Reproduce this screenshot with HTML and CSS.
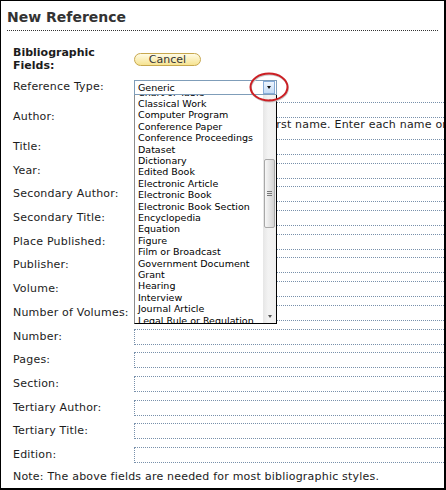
FILE: index.html
```html
<!DOCTYPE html>
<html>
<head>
<meta charset="utf-8">
<link rel="stylesheet" href="styles.css">
</head>
<body>
<div class="panel">
  <h1 class="title">New Reference</h1>
  <div class="form">
    <div class="row row-head">
      <div class="label label-bold">Bibliographic Fields:</div>
      <div class="field"><button class="cancel">Cancel</button></div>
    </div>
    <div class="row row-type">
      <div class="label">Reference Type:</div>
      <div class="field">
        <div class="select">
          <span class="select-text">Generic</span>
          <span class="select-btn"><span class="tri tri-down"></span></span>
          <div class="dropdown">
            <div class="options">
              <ul>
                <li>Chart or Table</li>
                <li>Classical Work</li>
                <li>Computer Program</li>
                <li>Conference Paper</li>
                <li>Conference Proceedings</li>
                <li>Dataset</li>
                <li>Dictionary</li>
                <li>Edited Book</li>
                <li>Electronic Article</li>
                <li>Electronic Book</li>
                <li>Electronic Book Section</li>
                <li>Encyclopedia</li>
                <li>Equation</li>
                <li>Figure</li>
                <li>Film or Broadcast</li>
                <li>Government Document</li>
                <li>Grant</li>
                <li>Hearing</li>
                <li>Interview</li>
                <li>Journal Article</li>
                <li>Legal Rule or Regulation</li>
                <li>Magazine Article</li>
              </ul>
            </div>
            <div class="scrollbar">
              <div class="sb-arrow"><span class="tri tri-up"></span></div>
              <div class="sb-track"><div class="sb-thumb"><i></i><i></i><i></i></div></div>
              <div class="sb-arrow"><span class="tri tri-down"></span></div>
            </div>
          </div>
          <svg class="callout" width="41" height="31" viewBox="0 0 41 31">
            <ellipse cx="20.5" cy="16" rx="18.5" ry="13.5" fill="none" stroke="#c9c9c9" stroke-width="2"/>
            <ellipse cx="20" cy="15" rx="18.5" ry="13.5" fill="none" stroke="#cc1f24" stroke-width="2"/>
          </svg>
        </div>
      </div>
    </div>
    <div class="row row-author">
      <div class="label">Author:</div>
      <div class="field">
        <div class="input"></div>
        <div class="hint">Use format Last name, First name. Enter each name on a new line.</div>
      </div>
    </div>
    <div class="row row-first">
      <div class="label">Title:</div>
      <div class="field"><div class="input"></div></div>
    </div>
    <div class="row">
      <div class="label">Year:</div>
      <div class="field"><div class="input"></div></div>
    </div>
    <div class="row">
      <div class="label">Secondary Author:</div>
      <div class="field"><div class="input"></div></div>
    </div>
    <div class="row">
      <div class="label">Secondary Title:</div>
      <div class="field"><div class="input"></div></div>
    </div>
    <div class="row">
      <div class="label">Place Published:</div>
      <div class="field"><div class="input"></div></div>
    </div>
    <div class="row">
      <div class="label">Publisher:</div>
      <div class="field"><div class="input"></div></div>
    </div>
    <div class="row">
      <div class="label">Volume:</div>
      <div class="field"><div class="input"></div></div>
    </div>
    <div class="row">
      <div class="label">Number of Volumes:</div>
      <div class="field"><div class="input"></div></div>
    </div>
    <div class="row">
      <div class="label">Number:</div>
      <div class="field"><div class="input"></div></div>
    </div>
    <div class="row">
      <div class="label">Pages:</div>
      <div class="field"><div class="input"></div></div>
    </div>
    <div class="row">
      <div class="label">Section:</div>
      <div class="field"><div class="input"></div></div>
    </div>
    <div class="row">
      <div class="label">Tertiary Author:</div>
      <div class="field"><div class="input"></div></div>
    </div>
    <div class="row">
      <div class="label">Tertiary Title:</div>
      <div class="field"><div class="input"></div></div>
    </div>
    <div class="row">
      <div class="label">Edition:</div>
      <div class="field"><div class="input"></div></div>
    </div>
    <p class="note">Note: The above fields are needed for most bibliographic styles.</p>
  </div>
</div>
</body>
</html>
```

FILE: styles.css
```css
* { box-sizing: border-box; }
body {
  margin: 0;
  background: #fff;
  font-family: "DejaVu Sans", Verdana, sans-serif;
  color: #1c1c1c;
}
.panel {
  width: 446px;
  height: 490px;
  border: 1px solid #000;
  border-right-width: 2px;
  border-bottom-width: 2px;
  overflow: hidden;
  background: #fff;
}
.title {
  margin: 0 6px;
  padding: 7px 0 4px 0;
  font-size: 14px;
  line-height: 18px;
  font-weight: bold;
  color: #333;
  border-bottom: 1px dotted #333;
}
.form {
  display: flex;
  flex-direction: column;
  padding-left: 12px;
}
.row {
  display: flex;
  align-items: center;
  margin-top: 7.69px;
}
.label {
  width: 121px;
  flex: none;
  font-size: 11px;
  line-height: 16px;
  letter-spacing: 0.2px;
  white-space: nowrap;
}
.field {
  flex: none;
  display: flex;
  flex-direction: column;
}
.row-head { margin-top: 15px; }
.label-bold {
  font-weight: bold;
  line-height: 13px;
  letter-spacing: 0;
  white-space: normal;
  padding-right: 20px;
}
.cancel {
  width: 67px;
  height: 13px;
  padding: 0;
  border: 1px solid #c7a84e;
  border-radius: 7px;
  background: linear-gradient(#fffbe4, #f6e391);
  font-family: "DejaVu Sans", Verdana, sans-serif;
  font-size: 11px;
  line-height: 11px;
  color: #333;
}
.row-type { margin-top: 7px; }
.row-author { margin-top: 7px; }
.row-first { margin-top: 8px; }

.select {
  position: relative;
  width: 143px;
  height: 15px;
  border: 1px solid #7f9db9;
  background: #fff;
  display: flex;
  align-items: center;
}
.select-text {
  flex: 1;
  padding-left: 3px;
  font-size: 9.5px;
  line-height: 13px;
  color: #000;
}
.select-btn {
  width: 12px;
  height: 13px;
  margin-right: 1px;
  border: 1px solid #86abd8;
  background: linear-gradient(#eef5fd, #c3dbf6);
  display: flex;
  align-items: center;
  justify-content: center;
}
.tri {
  display: block;
  width: 0;
  height: 0;
  border-left: 2.5px solid transparent;
  border-right: 2.5px solid transparent;
}
.tri-down { border-top: 3px solid #111; }
.tri-up { border-bottom: 3px solid #555; }
.sb-arrow .tri-down { border-top-color: #555; }

.dropdown {
  position: absolute;
  top: 14px;
  left: -1px;
  width: 143px;
  height: 229px;
  border-left: 1px solid #8c8c8c;
  border-right: 1px solid #000;
  border-bottom: 1px solid #000;
  background: #fff;
  display: flex;
  z-index: 2;
}
.options {
  flex: 1;
  overflow: hidden;
  padding-left: 3px;
}
.options ul {
  list-style: none;
  margin: -8px 0 0 0;
  padding: 0;
  font-size: 9.5px;
  line-height: 11.4px;
  color: #000;
  white-space: nowrap;
}
.scrollbar {
  width: 13px;
  flex: none;
  display: flex;
  flex-direction: column;
  background: linear-gradient(to right, #e6e6e6, #f3f3f3 40%, #efefef);
}
.sb-arrow {
  height: 12px;
  display: flex;
  align-items: center;
  justify-content: center;
}
.sb-track {
  flex: 1;
  padding: 52px 1px 0 1px;
}
.sb-thumb {
  height: 69px;
  border: 1px solid #a8a8a8;
  border-radius: 2px;
  background: linear-gradient(to right, #f7f7f7, #e2e2e2 60%, #d4d4d4);
  display: flex;
  flex-direction: column;
  align-items: center;
  justify-content: center;
  gap: 1px;
}
.sb-thumb i {
  display: block;
  width: 5px;
  height: 1px;
  background: #777;
}
.callout {
  position: absolute;
  left: 114px;
  top: -9px;
  z-index: 3;
  overflow: visible;
}

.input {
  width: 330px;
  height: 16px;
  border: 1px dotted #7890ab;
}
.hint {
  font-size: 11px;
  line-height: 13px;
  letter-spacing: 0.2px;
  white-space: nowrap;
  padding-left: 0;
  color: #1c1c1c;
}
.note {
  margin: 7.5px 0 0 0;
  font-size: 11px;
  line-height: 13px;
  letter-spacing: 0.2px;
  white-space: nowrap;
}
```
